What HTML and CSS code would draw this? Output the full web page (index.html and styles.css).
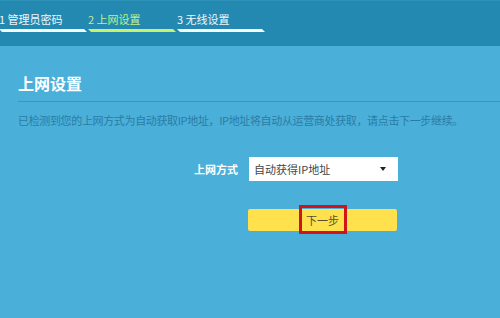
FILE: index.html
```html
<!DOCTYPE html>
<html lang="zh-CN">

<head>
    <meta charset="UTF-8">
    <meta name="viewport" content="width=device-width, initial-scale=1.0">
    <title>上网设置</title>
    <link rel="stylesheet" href="styles.css">
</head>

<body>
    <header class="steps">
        <div class="step">
            <span class="step-label">1 管理员密码</span>
            <span class="step-bar"></span>
        </div>
        <div class="step active">
            <span class="step-label">2 上网设置</span>
            <span class="step-bar"></span>
        </div>
        <div class="step">
            <span class="step-label">3 无线设置</span>
            <span class="step-bar"></span>
        </div>
    </header>

    <main class="content">
        <h2 class="section-title">上网设置</h2>
        <p class="section-desc">已检测到您的上网方式为自动获取IP地址，IP地址将自动从运营商处获取，请点击下一步继续。</p>

        <div class="form-row">
            <label class="form-label">上网方式</label>
            <div class="select">
                <span class="select-value">自动获得IP地址</span>
                <span class="select-arrow"></span>
            </div>
        </div>

        <div class="form-row actions">
            <span class="form-label"></span>
            <button class="btn-next">下一步<span class="mark"></span></button>
        </div>
    </main>
</body>

</html>
```

FILE: styles.css
```css
* {
    margin: 0;
    padding: 0;
    box-sizing: border-box;
}

body {
    font-family: "Noto Sans CJK SC", "Noto Sans", sans-serif;
    background: #4aafd9;
    height: 318px;
    overflow: hidden;
}

/* Wizard steps */
.steps {
    height: 46px;
    background: #2489b1;
    border-top: 1px solid #2e92b9;
    display: flex;
    gap: 1px;
    margin-left: -1px;
    padding-top: 10px;
}

.step {
    width: 88px;
    display: flex;
    flex-direction: column;
}

.step-label {
    font-size: 11px;
    line-height: 16px;
    color: #eef7fb;
}

.step-bar {
    margin-top: 2px;
    height: 3px;
    background: #f4fbff;
    clip-path: polygon(0 0, calc(100% - 3px) 0, 100% 100%, 3px 100%);
}

.step.active .step-label {
    color: #bdf28c;
}

.step.active .step-bar {
    background: #c8f26e;
}

/* Content */
.content {
    padding-left: 18px;
}

.section-title {
    margin-top: 26px;
    font-size: 16px;
    line-height: 22px;
    font-weight: 700;
    color: #ffffff;
}

.section-desc {
    margin-top: 7px;
    padding-top: 10px;
    border-top: 1px solid #3896c1;
    font-size: 11px;
    line-height: 16px;
    letter-spacing: -0.35px;
    color: #2a7ca6;
}

.form-row {
    display: flex;
    align-items: center;
    gap: 11px;
    margin-top: 29px;
}

.form-label {
    width: 220px;
    text-align: right;
    font-size: 11px;
    font-weight: 700;
    color: #ffffff;
}

.select {
    width: 149px;
    height: 24px;
    background: #ffffff;
    display: flex;
    align-items: center;
    justify-content: space-between;
    padding: 0 12px 0 5px;
}

.select-value {
    font-size: 11px;
    color: #444444;
}

.select-arrow {
    width: 0;
    height: 0;
    border-left: 3px solid transparent;
    border-right: 3px solid transparent;
    border-top: 4px solid #222222;
}

.actions {
    margin-top: 28px;
}

.btn-next {
    position: relative;
    margin-left: -1px;
    width: 149px;
    height: 22px;
    border: none;
    border-radius: 2px;
    background: #ffe14d;
    font-family: inherit;
    font-size: 11px;
    color: #55502a;
}

/* Red annotation box over the button text */
.mark {
    position: absolute;
    left: 51px;
    top: -4px;
    width: 48px;
    height: 29px;
    border: 3px solid #d0141a;
}
```
